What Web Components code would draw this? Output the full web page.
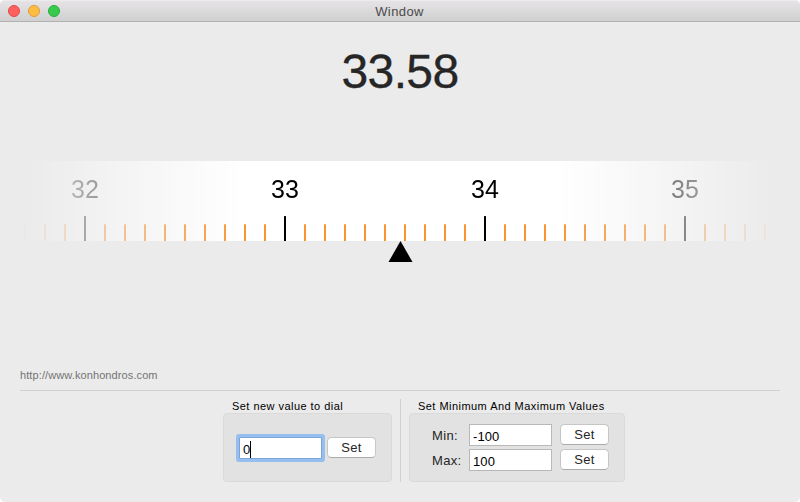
<!DOCTYPE html>
<html lang="en">
<head>
<meta charset="utf-8">
<title>Window</title>
<style>
html,body{margin:0;background:#fff}
body{width:800px;height:502px;overflow:hidden;font:13px/16px "Liberation Sans",Arial,sans-serif;color:#262626}
</style>
</head>
<body>
<dial-app></dial-app>
<script>
const define = (name, html, setup) => customElements.define(name, class extends HTMLElement {
  constructor() {
    super();
    const t = document.createElement('template');
    t.innerHTML = html;
    this.attachShadow({ mode: 'open' }).append(t.content.cloneNode(true));
  }
  connectedCallback() { if (setup) setup(this, this.shadowRoot); }
});

define('title-bar', `
<style>
:host{display:grid;grid-template-columns:1fr auto 1fr;align-items:center;height:22px;box-sizing:border-box;border-bottom:1px solid #b1b1b1;background:linear-gradient(#f4f2f4 0,#e6e3e6 1px,#d0d0d0 100%);color:#4b4b4b}
.lights{display:flex;gap:8px;padding:1px 0 0 8px}
i{width:12px;height:12px;box-sizing:border-box;border-radius:50%;border:1px solid #e2484b;background:#fd605e}
i:nth-child(2){background:#fdbd44;border-color:#de9f35}
i:nth-child(3){background:#36cb4d;border-color:#27ae3a}
.t{letter-spacing:.4px;padding-top:2px;position:relative;left:-.5px}
</style>
<div class="lights"><i></i><i></i><i></i></div><div class="t"><slot></slot></div>`);

// Ruler with ten ticks per unit; both ends fade into the window.
define('ruler-dial', `
<style>
:host{display:block;margin:0 20px;height:101px}
.face{height:80px;background:#fff;display:flex;align-items:flex-end;padding-left:4px;box-sizing:border-box;overflow:hidden;-webkit-mask:linear-gradient(90deg,transparent,#000 30%,#000 70%,transparent);mask:linear-gradient(90deg,transparent,#000 30%,#000 70%,transparent)}
.tick{flex:none;width:2px;margin-right:18px;height:17px;background:linear-gradient(#fcb268 1px,#fa9330 1px)}
.major{height:66px;display:flex;flex-direction:column;align-items:center;background:linear-gradient(#333,#000 1px) bottom/2px 25px no-repeat}
.major span{font-size:25px;line-height:28px;color:#000}
svg{display:block;margin:0 auto;position:relative;left:.5px}
</style>
<div class="face"></div>
<svg width="25" height="22" viewBox="0 0 25 22"><path d="M12.5 0L24.5 21H.5Z" fill="#000"/></svg>`,
(el, root) => {
  const face = root.querySelector('.face');
  for (let i = 0; i < 38; i++) {
    const tick = document.createElement('div');
    tick.className = 'tick';
    if (i % 10 === 3) {
      tick.classList.add('major');
      const label = document.createElement('span');
      label.textContent = Number(el.getAttribute('start')) + (i - 3) / 10;
      tick.append(label);
    }
    face.append(tick);
  }
});

define('push-button', `
<style>
:host{display:flex;justify-content:center;width:49px;height:21px;box-sizing:border-box;border:1px solid #c6c6c6;border-bottom-color:#aaa;border-radius:4.5px;background:#fff;line-height:19px;letter-spacing:.25px}
</style><slot></slot>`);

define('text-field', `
<style>
:host{display:block;width:83px;height:22px;box-sizing:border-box;border:1px solid #b8b8b8;background:#fff;color:#000;padding-left:3px;line-height:23px;letter-spacing:.1px}
:host([focused]){border-color:#7ba4db;box-shadow:0 0 0 3px #96bfef;border-radius:1px}
.v{display:inline-flex;align-items:center}
:host([focused]) .v::after{content:"";width:1px;height:17px;margin-top:-1px;background:#000}
</style><span class="v"><slot></slot></span>`);

define('group-box', `
<style>
:host{display:block}
.cap{font-size:11px;line-height:15px;height:14px;padding-left:9px;color:#000;letter-spacing:.46px;white-space:nowrap}
.box{height:69px;box-sizing:border-box;border:1px solid #dadada;border-radius:4px;background:#e2e2e2}
</style>
<div class="cap"><slot name="caption"></slot></div><div class="box"><slot></slot></div>`);

define('dial-app', `
<style>
:host{display:flex;flex-direction:column;width:800px;height:502px;background:#ebebeb;border-radius:5px;overflow:hidden}
.value{font-size:48px;line-height:56px;margin-top:22px;text-align:center;color:#262626;letter-spacing:-.6px;-webkit-text-stroke:.35px}
ruler-dial{margin-top:61px}
.link{margin:107px 20px 0;height:21px;font-size:11px;line-height:13px;color:#737373;letter-spacing:.1px;border-bottom:1px solid #d1d1d1}
.controls{display:flex;margin:8px 0 0 223px;height:83px}
.new{width:169px}
.new .row{display:flex;gap:5px;padding:23px 0 0 15px}
.rule{width:1px;background:#d1d1d1;margin:0 8px}
.range{width:216px}
.grid{display:grid;grid-template-columns:37px 83px 49px;column-gap:0;row-gap:3px;padding:10px 0 0 22px}
.grid push-button{margin-left:8px}
.grid label{line-height:24px;height:22px;letter-spacing:.35px}
</style>
<title-bar>Window</title-bar>
<div class="value">33.58</div>
<ruler-dial start="32"></ruler-dial>
<div class="link">http://www.konhondros.com</div>
<div class="controls">
  <group-box class="new"><span slot="caption">Set new value to dial</span>
    <div class="row"><text-field focused>0</text-field><push-button>Set</push-button></div></group-box>
  <div class="rule"></div>
  <group-box class="range"><span slot="caption">Set Minimum And Maximum Values</span>
    <div class="grid"><label>Min:</label><text-field>-100</text-field><push-button>Set</push-button>
    <label>Max:</label><text-field>100</text-field><push-button>Set</push-button></div></group-box>
</div>`);
</script>
</body>
</html>
